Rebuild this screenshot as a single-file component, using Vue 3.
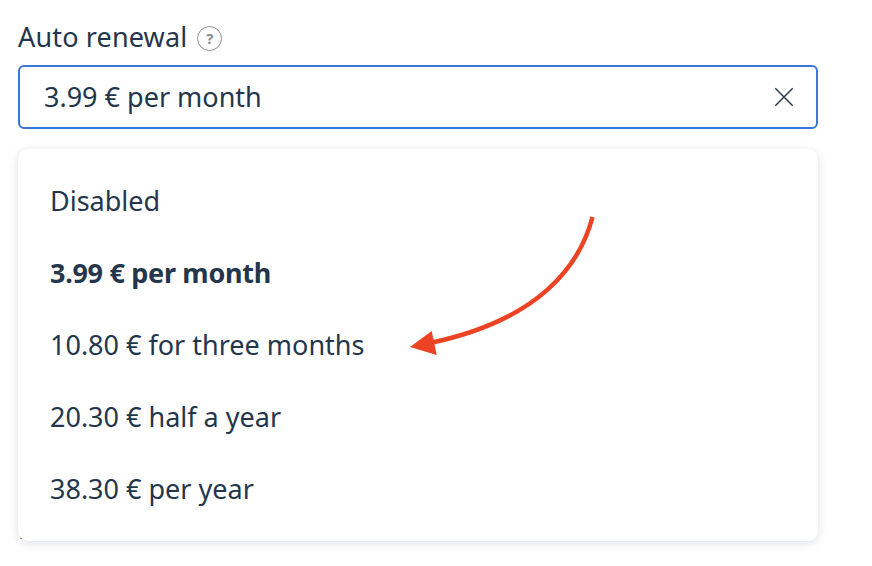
<script setup>
const options = [
  { label: 'Disabled', active: false },
  { label: '3.99 € per month', active: true },
  { label: '10.80 € for three months', active: false },
  { label: '20.30 € half a year', active: false },
  { label: '38.30 € per year', active: false },
]
</script>

<template>
  <main class="page">
    <div class="label-row">
      <span class="label">Auto renewal</span>
      <span class="help">?</span>
    </div>
    <div class="field-wrap">
      <div class="input">
        <span class="value">3.99 € per month</span>
        <svg class="clear" width="20" height="20" viewBox="0 0 20 20">
          <path d="M1.3 1.3 18.7 18.7M18.7 1.3 1.3 18.7" />
        </svg>
      </div>
      <div class="behind">Discount</div>
      <ul class="menu">
        <li v-for="o in options" :key="o.label" class="option" :class="{ active: o.active }">{{ o.label }}</li>
      </ul>
      <svg class="arrow" width="872" height="566" viewBox="0 0 872 566">
        <path class="shaft" d="M592.5 217C580 265 540 320 430 343" />
        <path class="head" d="M410 347 431.7 331 436.7 355Z" />
      </svg>
    </div>
  </main>
</template>

<style>
html, body { margin: 0; background: #fff; }
</style>

<style scoped>
.page {
  width: 872px;
  height: 566px;
  box-sizing: border-box;
  padding: 20px 54px 0 18px;
  font-family: "Noto Sans", "Open Sans", sans-serif;
  color: #24364b;
  overflow: hidden;
  position: relative;
}
.label-row {
  display: flex;
  align-items: center;
  gap: 10px;
  height: 34px;
}
.label { font-size: 27px; line-height: 34px; letter-spacing: 0.15px; }
.help {
  width: 25px;
  height: 25px;
  box-sizing: border-box;
  border: 1px solid #8f8f8f;
  border-radius: 50%;
  color: #8f8f8f;
  font-size: 15px;
  font-weight: 700;
  line-height: 23px;
  text-align: center;
  margin-top: 3px;
}
.field-wrap { margin-top: 11px; }
.input {
  height: 64px;
  box-sizing: border-box;
  border: 2px solid #3b77d8;
  border-radius: 6px;
  padding: 0 22px 0 24px;
  display: flex;
  align-items: center;
  justify-content: space-between;
}
.value { font-size: 27px; line-height: 58px; }
.clear path { fill: none; stroke: #2b3b4e; stroke-width: 1.5; }
.behind {
  position: absolute;
  left: 18px;
  top: 512px;
  font-size: 27px;
  line-height: 34px;
}
.menu {
  position: relative;
  list-style: none;
  margin: 20px 0 0;
  padding: 16px 0;
  height: 392px;
  box-sizing: border-box;
  background: #fff;
  border-radius: 10px;
  box-shadow: 0 2px 10px rgba(40, 50, 90, 0.16);
}
.option {
  height: 72px;
  line-height: 71px;
  padding-left: 32px;
  font-size: 27px;
}
.option.active { font-weight: 700; letter-spacing: -0.3px; }
.arrow { position: absolute; left: 0; top: 0; pointer-events: none; }
.shaft { fill: none; stroke: #ec4324; stroke-width: 4.5; }
.head { fill: #ec4324; }
</style>
